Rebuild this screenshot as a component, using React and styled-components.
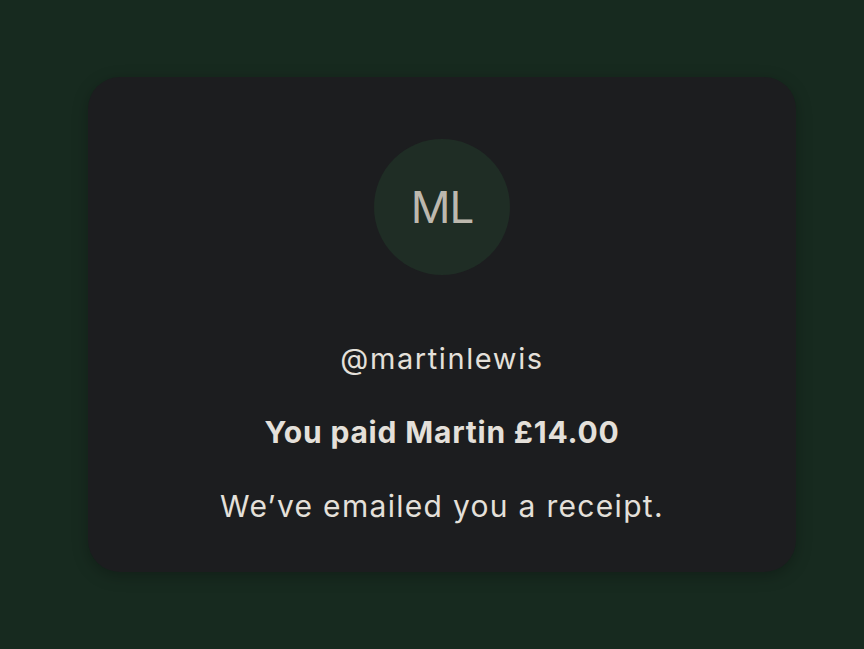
import React from 'react'
import styled, { createGlobalStyle } from 'styled-components'

const GlobalStyle = createGlobalStyle`
  html, body {
    margin: 0;
    padding: 0;
    background: #172a1f;
  }
  body {
    font-family: Inter, "Noto Sans", sans-serif;
    min-height: 649px;
  }
`

export default function App() {
  return (
    <>
      <GlobalStyle />
      <Page>
        <Card>
          <Avatar>ML</Avatar>
          <Handle>@martinlewis</Handle>
          <Amount>You paid Martin £14.00</Amount>
          <Note>We’ve emailed you a receipt.</Note>
        </Card>
      </Page>
    </>
  )
}

const Page = styled.div`
  display: flex;
  justify-content: center;
  padding: 77px 68px 0 88px;
`

const Card = styled.div`
  flex: 1;
  display: flex;
  flex-direction: column;
  align-items: center;
  background: #1c1d1f;
  border-radius: 32px;
  padding: 62px 0 46px;
  box-shadow: 0 4px 16px rgba(0, 0, 0, 0.25);
  color: #e4e0da;
`

const Avatar = styled.div`
  width: 136px;
  height: 136px;
  border-radius: 50%;
  background: #1f2d25;
  color: #bdb8ae;
  display: flex;
  align-items: center;
  justify-content: center;
  font-size: 44px;
  letter-spacing: -1px;
`

const Handle = styled.div`
  margin-top: 66px;
  font-size: 29px;
  line-height: 36px;
  letter-spacing: 1.6px;
`

const Amount = styled.div`
  margin-top: 35px;
  font-size: 30px;
  line-height: 40px;
  font-weight: 700;
  letter-spacing: 0.8px;
`

const Note = styled.div`
  margin-top: 34px;
  font-size: 30px;
  line-height: 40px;
  letter-spacing: 1.3px;
`
